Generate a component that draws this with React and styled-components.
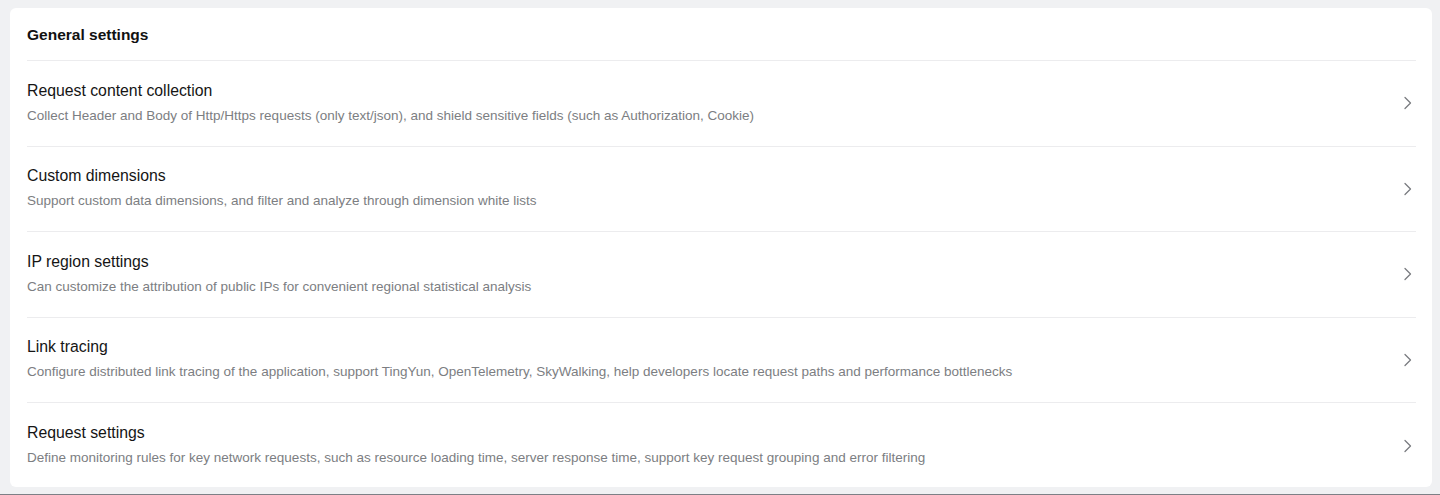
import React from 'react';
import styled, { createGlobalStyle } from 'styled-components';

const GlobalStyle = createGlobalStyle`
  html, body {
    margin: 0;
    padding: 0;
    background: #f0f1f3;
    font-family: "Liberation Sans", Arial, sans-serif;
  }
  body {
    height: 495px;
    box-sizing: border-box;
    border-bottom: 1px solid #7d8086;
    overflow: hidden;
  }
`;

const items = [
  {
    title: 'Request content collection',
    desc: 'Collect Header and Body of Http/Https requests (only text/json), and shield sensitive fields (such as Authorization, Cookie)',
  },
  {
    title: 'Custom dimensions',
    desc: 'Support custom data dimensions, and filter and analyze through dimension white lists',
  },
  {
    title: 'IP region settings',
    desc: 'Can customize the attribution of public IPs for convenient regional statistical analysis',
  },
  {
    title: 'Link tracing',
    desc: 'Configure distributed link tracing of the application, support TingYun, OpenTelemetry, SkyWalking, help developers locate request paths and performance bottlenecks',
  },
  {
    title: 'Request settings',
    desc: 'Define monitoring rules for key network requests, such as resource loading time, server response time, support key request grouping and error filtering',
  },
];

const Chevron = () => (
  <svg width="10" height="14" viewBox="0 0 10 14" fill="none">
    <path d="M2 1.5 L7.5 7 L2 12.5" stroke="#7a7c80" strokeWidth="1.3" strokeLinecap="round" strokeLinejoin="round" />
  </svg>
);

export default function App() {
  return (
    <Page>
      <GlobalStyle />
      <Card>
        <Header>General settings</Header>
        <List>
          {items.map((item) => (
            <Row key={item.title}>
              <Text>
                <Title>{item.title}</Title>
                <Desc>{item.desc}</Desc>
              </Text>
              <Arrow>
                <Chevron />
              </Arrow>
            </Row>
          ))}
        </List>
      </Card>
    </Page>
  );
}

const Page = styled.div`
  padding: 8px 8px 0 10px;
`;

const Card = styled.div`
  background: #fff;
  border-radius: 6px;
  padding: 0 16px 0 17px;
  height: 479px;
  box-sizing: border-box;
`;

const Header = styled.div`
  height: 53px;
  box-sizing: border-box;
  padding-top: 2px;
  display: flex;
  align-items: center;
  font-size: 15.5px;
  font-weight: bold;
  color: #111;
  border-bottom: 1px solid #ececee;
`;

const List = styled.div`
  display: flex;
  flex-direction: column;
`;

const Row = styled.div`
  height: 85.5px;
  box-sizing: border-box;
  display: flex;
  align-items: center;
  justify-content: space-between;
  border-bottom: 1px solid #ececee;
  cursor: pointer;

  &:last-child {
    border-bottom: none;
    height: 85px;
  }
`;

const Text = styled.div`
  display: flex;
  flex-direction: column;
  gap: 6px;
  margin-top: -1px;
`;

const Title = styled.div`
  font-size: 15.8px;
  line-height: 20px;
  color: #151515;
`;

const Desc = styled.div`
  font-size: 13.5px;
  line-height: 18px;
  color: #7c7e82;
`;

const Arrow = styled.div`
  display: flex;
  align-items: center;
  margin-right: 3px;
`;
